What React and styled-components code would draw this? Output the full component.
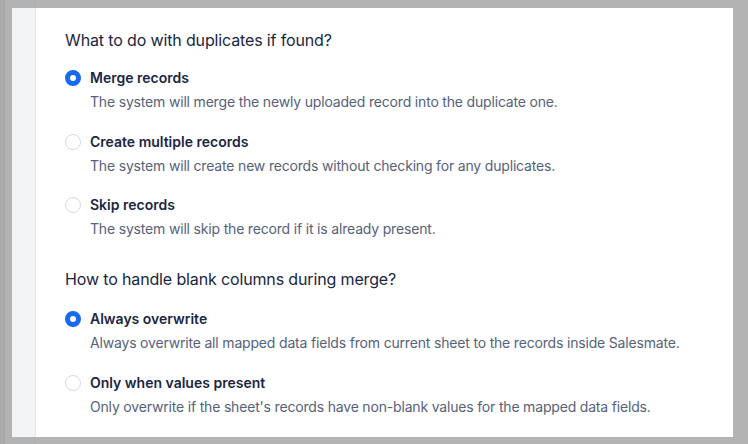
import React, { useState } from "react";
import styled, { createGlobalStyle } from "styled-components";

const GlobalStyle = createGlobalStyle`
  html, body {
    margin: 0;
    padding: 0;
  }
  body {
    width: 748px;
    height: 444px;
    overflow: hidden;
    font-family: Inter, "Noto Sans", sans-serif;
    background:
      linear-gradient(to right,
        #ababab 0, #ababab 4px,
        #a6a6a6 4px, #a6a6a6 5px,
        #b3b3b3 5px, #b3b3b3 34px,
        #adadad 34px, #adadad 35px,
        #b3b3b3 35px);
  }
`;

const Backdrop = styled.div`
  height: 444px;
  padding: 8px 0 0 12px;
  box-sizing: border-box;
`;

const Modal = styled.div`
  display: flex;
  width: 721px;
  height: 429px;
  background: #fff;
`;

const Rail = styled.div`
  width: 23px;
  flex-shrink: 0;
  background: #f3f4f6;
  border-right: 1px solid #e4e6ea;
`;

const Content = styled.div`
  flex: 1;
  padding: 20px 0 0 29px;
`;

const Section = styled.section`
  margin-bottom: 28px;
`;

const Heading = styled.h3`
  margin: 0 0 ${(p) => p.$gap}px;
  font-size: 16px;
  line-height: 24px;
  font-weight: 400;
  letter-spacing: -0.14px;
  color: #1a2642;
`;

const Options = styled.div`
  display: flex;
  flex-direction: column;
  gap: 19.5px;
`;

const Option = styled.label`
  display: grid;
  grid-template-columns: 16px 1fr;
  column-gap: 9px;
  row-gap: 4px;
  cursor: pointer;
`;

const Radio = styled.span`
  width: 16px;
  height: 16px;
  margin-top: 2px;
  border-radius: 50%;
  box-sizing: border-box;
  background: #fff;
  border: ${(p) => (p.$checked ? "5px solid #1769f0" : "1px solid #d6dae1")};
`;

const Label = styled.span`
  font-size: 14px;
  line-height: 20px;
  font-weight: 600;
  color: #1a2642;
`;

const Description = styled.span`
  grid-column: 2;
  font-size: 14px;
  line-height: 20px;
  letter-spacing: -0.18px;
  color: #56627a;
`;

const duplicateOptions = [
  {
    id: "merge",
    label: "Merge records",
    text: "The system will merge the newly uploaded record into the duplicate one.",
  },
  {
    id: "multiple",
    label: "Create multiple records",
    text: "The system will create new records without checking for any duplicates.",
  },
  {
    id: "skip",
    label: "Skip records",
    text: "The system will skip the record if it is already present.",
  },
];

const blankOptions = [
  {
    id: "overwrite",
    label: "Always overwrite",
    text: "Always overwrite all mapped data fields from current sheet to the records inside Salesmate.",
  },
  {
    id: "present",
    label: "Only when values present",
    text: "Only overwrite if the sheet's records have non-blank values for the mapped data fields.",
  },
];

const RadioGroup = ({ options, value, onChange }) => (
  <Options>
    {options.map((o) => (
      <Option key={o.id} onClick={() => onChange(o.id)}>
        <Radio $checked={value === o.id} />
        <Label>{o.label}</Label>
        <Description>{o.text}</Description>
      </Option>
    ))}
  </Options>
);

const App = () => {
  const [duplicates, setDuplicates] = useState("merge");
  const [blanks, setBlanks] = useState("overwrite");

  return (
    <>
      <GlobalStyle />
      <Backdrop>
        <Modal>
          <Rail />
          <Content>
            <Section>
              <Heading $gap={16}>What to do with duplicates if found?</Heading>
              <RadioGroup
                options={duplicateOptions}
                value={duplicates}
                onChange={setDuplicates}
              />
            </Section>
            <Section>
              <Heading $gap={18}>How to handle blank columns during merge?</Heading>
              <RadioGroup
                options={blankOptions}
                value={blanks}
                onChange={setBlanks}
              />
            </Section>
          </Content>
        </Modal>
      </Backdrop>
    </>
  );
};

export default App;
